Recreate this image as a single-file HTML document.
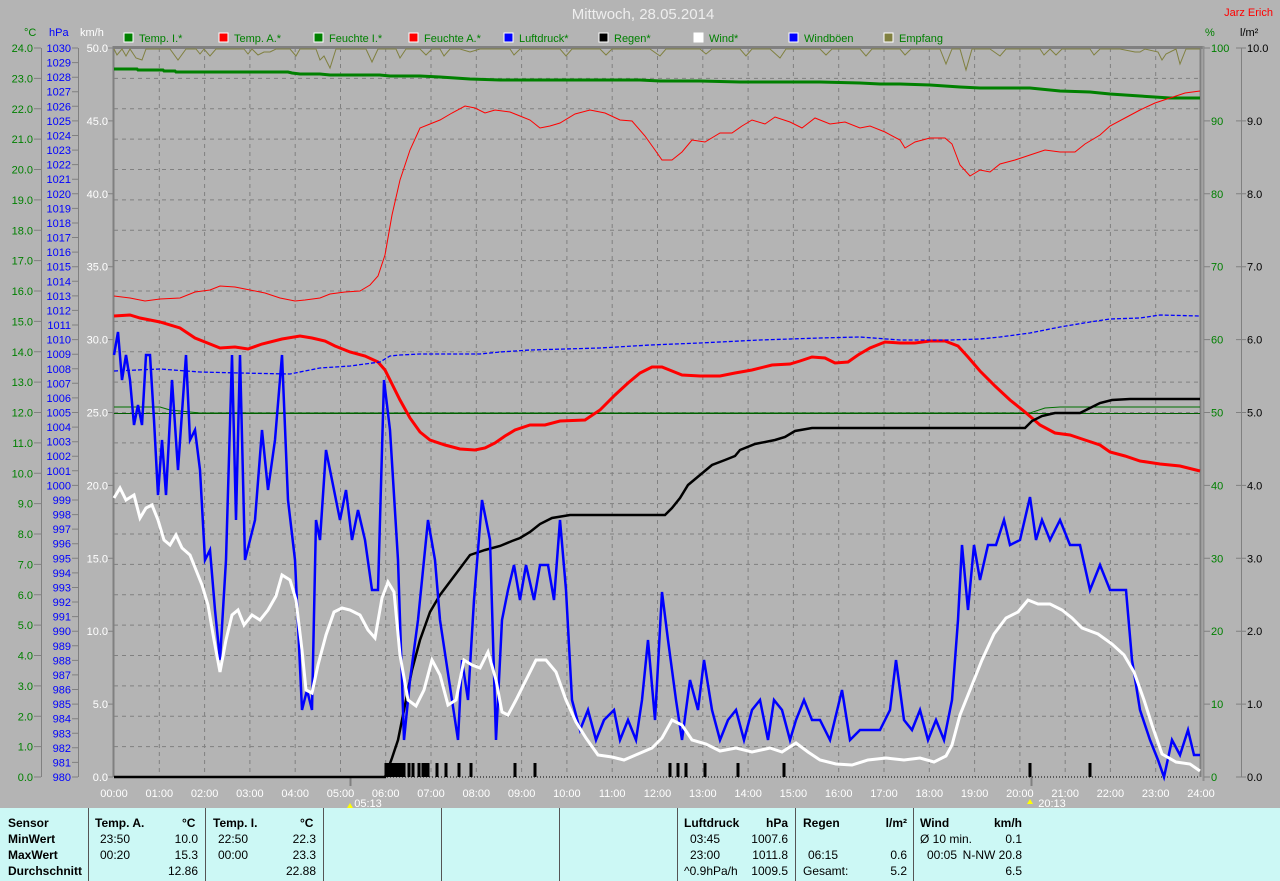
<!DOCTYPE html>
<html><head><meta charset="utf-8"><style>
body{margin:0;width:1280px;height:881px;background:#b4b4b4;overflow:hidden;font-family:"Liberation Sans",sans-serif}
svg{position:absolute;left:0;top:0}
#tbl{position:absolute;left:0;top:808px;width:1280px;height:73px;background:#ccf8f5;font-size:12px;color:#000}
.sep{position:absolute;top:0;width:1px;height:73px;background:#555}
.t{position:absolute;white-space:nowrap}
.b{font-weight:bold}
.r{text-align:right}
</style></head><body>
<svg width="1280" height="808" font-family="Liberation Sans, sans-serif" font-size="11">
<text x="643" y="19" fill="#eeeeee" font-size="15" text-anchor="middle">Mittwoch, 28.05.2014</text>
<text x="1273" y="16" fill="#ff0000" font-size="11" text-anchor="end">Jarz Erich</text>
<!-- legend -->
<g font-size="11">
<rect x="124" y="33" width="9" height="9" fill="#008000" stroke="#fff"/><text x="139" y="42" fill="#008000">Temp. I.*</text>
<rect x="219" y="33" width="9" height="9" fill="#ff0000" stroke="#fff"/><text x="234" y="42" fill="#008000">Temp. A.*</text>
<rect x="314" y="33" width="9" height="9" fill="#008000" stroke="#fff"/><text x="329" y="42" fill="#008000">Feuchte I.*</text>
<rect x="409" y="33" width="9" height="9" fill="#ff0000" stroke="#fff"/><text x="424" y="42" fill="#008000">Feuchte A.*</text>
<rect x="504" y="33" width="9" height="9" fill="#0000ff" stroke="#fff"/><text x="519" y="42" fill="#008000">Luftdruck*</text>
<rect x="599" y="33" width="9" height="9" fill="#000" stroke="#fff"/><text x="614" y="42" fill="#008000">Regen*</text>
<rect x="694" y="33" width="9" height="9" fill="#fff" stroke="#fff"/><text x="709" y="42" fill="#008000">Wind*</text>
<rect x="789" y="33" width="9" height="9" fill="#0000ff" stroke="#fff"/><text x="804" y="42" fill="#008000">Windböen</text>
<rect x="884" y="33" width="9" height="9" fill="#808040" stroke="#fff"/><text x="899" y="42" fill="#008000">Empfang</text>
</g>
<text x="24" y="36" fill="#008000">°C</text>
<text x="49" y="36" fill="#0000ff">hPa</text>
<text x="80" y="36" fill="#fff">km/h</text>
<text x="1205" y="36" fill="#008000">%</text>
<text x="1240" y="36" fill="#000">l/m²</text>
<!-- grid -->
<g stroke="#808080" stroke-dasharray="4,4" stroke-width="1">
<path d="M114 78.4H1200M114 108.75H1200M114 139.1H1200M114 169.5H1200M114 199.9H1200M114 230.3H1200M114 260.6H1200M114 291H1200M114 321.4H1200M114 351.75H1200M114 382.1H1200M114 412.5H1200M114 442.9H1200M114 473.3H1200M114 503.6H1200M114 534H1200M114 564.4H1200M114 594.75H1200M114 625.1H1200M114 655.5H1200M114 685.9H1200M114 716.3H1200M114 746.6H1200"/>
<path d="M159.3 48V777M204.6 48V777M249.9 48V777M295.2 48V777M340.5 48V777M385.7 48V777M431 48V777M476.3 48V777M521.6 48V777M566.9 48V777M612.2 48V777M657.5 48V777M702.8 48V777M748.1 48V777M793.4 48V777M838.7 48V777M884 48V777M929.3 48V777M974.6 48V777M1019.9 48V777M1065.2 48V777M1110.4 48V777M1155.7 48V777"/>
</g>
<!-- frame -->
<path d="M113 47.5H1204" stroke="#808080" stroke-width="3"/>
<path d="M113.5 46V777M1200.5 46V777" stroke="#808080" stroke-width="2"/>
<path d="M1203.5 46V781" stroke="#909090" stroke-width="2"/>
<path d="M41.5 48V777M78.5 48V777M1241.5 48V777" stroke="#808080"/>
<path d="M350.5 777V786M1031.5 777V786" stroke="#808080" stroke-width="2"/>
<!-- ticks -->
<g stroke="#808080">
<path d="M34 48H41M34 78.4H41M34 108.75H41M34 139.1H41M34 169.5H41M34 199.9H41M34 230.3H41M34 260.6H41M34 291H41M34 321.4H41M34 351.75H41M34 382.1H41M34 412.5H41M34 442.9H41M34 473.3H41M34 503.6H41M34 534H41M34 564.4H41M34 594.75H41M34 625.1H41M34 655.5H41M34 685.9H41M34 716.3H41M34 746.6H41M34 777H41"/>
<path d="M72 48H78M72 62.6H78M72 77.2H78M72 91.7H78M72 106.3H78M72 120.9H78M72 135.5H78M72 150.1H78M72 164.6H78M72 179.2H78M72 193.8H78M72 208.4H78M72 223H78M72 237.5H78M72 252.1H78M72 266.7H78M72 281.3H78M72 295.9H78M72 310.4H78M72 325H78M72 339.6H78M72 354.2H78M72 368.8H78M72 383.3H78M72 397.9H78M72 412.5H78M72 427.1H78M72 441.7H78M72 456.2H78M72 470.8H78M72 485.4H78M72 500H78M72 514.6H78M72 529.1H78M72 543.7H78M72 558.3H78M72 572.9H78M72 587.5H78M72 602H78M72 616.6H78M72 631.2H78M72 645.8H78M72 660.4H78M72 674.9H78M72 689.5H78M72 704.1H78M72 718.7H78M72 733.3H78M72 747.8H78M72 762.4H78M72 777H78"/>
<path d="M108 48H113M108 120.9H113M108 193.8H113M108 266.7H113M108 339.6H113M108 412.5H113M108 485.4H113M108 558.3H113M108 631.2H113M108 704.1H113M108 777H113"/>
<path d="M1204 48H1210M1204 120.9H1210M1204 193.8H1210M1204 266.7H1210M1204 339.6H1210M1204 412.5H1210M1204 485.4H1210M1204 558.3H1210M1204 631.2H1210M1204 704.1H1210M1204 777H1210"/>
<path d="M1236 48H1246M1236 120.9H1246M1236 193.8H1246M1236 266.7H1246M1236 339.6H1246M1236 412.5H1246M1236 485.4H1246M1236 558.3H1246M1236 631.2H1246M1236 704.1H1246M1236 777H1246"/>
</g>
<!-- °C labels -->
<g fill="#008000" text-anchor="end">
<text x="33" y="52">24.0</text><text x="33" y="82.4">23.0</text><text x="33" y="112.75">22.0</text><text x="33" y="143.1">21.0</text><text x="33" y="173.5">20.0</text><text x="33" y="203.9">19.0</text><text x="33" y="234.3">18.0</text><text x="33" y="264.6">17.0</text><text x="33" y="295">16.0</text><text x="33" y="325.4">15.0</text><text x="33" y="355.75">14.0</text><text x="33" y="386.1">13.0</text><text x="33" y="416.5">12.0</text><text x="33" y="446.9">11.0</text><text x="33" y="477.3">10.0</text><text x="33" y="507.6">9.0</text><text x="33" y="538">8.0</text><text x="33" y="568.4">7.0</text><text x="33" y="598.75">6.0</text><text x="33" y="629.1">5.0</text><text x="33" y="659.5">4.0</text><text x="33" y="689.9">3.0</text><text x="33" y="720.3">2.0</text><text x="33" y="750.6">1.0</text><text x="33" y="781">0.0</text>
</g>
<g fill="#0000ff" text-anchor="end">
<text x="71" y="52">1030</text><text x="71" y="66.6">1029</text><text x="71" y="81.2">1028</text><text x="71" y="95.7">1027</text><text x="71" y="110.3">1026</text><text x="71" y="124.9">1025</text><text x="71" y="139.5">1024</text><text x="71" y="154.1">1023</text><text x="71" y="168.6">1022</text><text x="71" y="183.2">1021</text><text x="71" y="197.8">1020</text><text x="71" y="212.4">1019</text><text x="71" y="227">1018</text><text x="71" y="241.5">1017</text><text x="71" y="256.1">1016</text><text x="71" y="270.7">1015</text><text x="71" y="285.3">1014</text><text x="71" y="299.9">1013</text><text x="71" y="314.4">1012</text><text x="71" y="329">1011</text><text x="71" y="343.6">1010</text><text x="71" y="358.2">1009</text><text x="71" y="372.8">1008</text><text x="71" y="387.3">1007</text><text x="71" y="401.9">1006</text><text x="71" y="416.5">1005</text><text x="71" y="431.1">1004</text><text x="71" y="445.7">1003</text><text x="71" y="460.2">1002</text><text x="71" y="474.8">1001</text><text x="71" y="489.4">1000</text><text x="71" y="504">999</text><text x="71" y="518.6">998</text><text x="71" y="533.1">997</text><text x="71" y="547.7">996</text><text x="71" y="562.3">995</text><text x="71" y="576.9">994</text><text x="71" y="591.5">993</text><text x="71" y="606">992</text><text x="71" y="620.6">991</text><text x="71" y="635.2">990</text><text x="71" y="649.8">989</text><text x="71" y="664.4">988</text><text x="71" y="678.9">987</text><text x="71" y="693.5">986</text><text x="71" y="708.1">985</text><text x="71" y="722.7">984</text><text x="71" y="737.3">983</text><text x="71" y="751.8">982</text><text x="71" y="766.4">981</text><text x="71" y="781">980</text>
</g>
<g fill="#fff" text-anchor="end">
<text x="108" y="52">50.0</text><text x="108" y="124.9">45.0</text><text x="108" y="197.8">40.0</text><text x="108" y="270.7">35.0</text><text x="108" y="343.6">30.0</text><text x="108" y="416.5">25.0</text><text x="108" y="489.4">20.0</text><text x="108" y="562.3">15.0</text><text x="108" y="635.2">10.0</text><text x="108" y="708.1">5.0</text><text x="108" y="781">0.0</text>
</g>
<g fill="#008000">
<text x="1211" y="52">100</text><text x="1211" y="124.9">90</text><text x="1211" y="197.8">80</text><text x="1211" y="270.7">70</text><text x="1211" y="343.6">60</text><text x="1211" y="416.5">50</text><text x="1211" y="489.4">40</text><text x="1211" y="562.3">30</text><text x="1211" y="635.2">20</text><text x="1211" y="708.1">10</text><text x="1211" y="781">0</text>
</g>
<g fill="#000">
<text x="1247" y="52">10.0</text><text x="1247" y="124.9">9.0</text><text x="1247" y="197.8">8.0</text><text x="1247" y="270.7">7.0</text><text x="1247" y="343.6">6.0</text><text x="1247" y="416.5">5.0</text><text x="1247" y="489.4">4.0</text><text x="1247" y="562.3">3.0</text><text x="1247" y="635.2">2.0</text><text x="1247" y="708.1">1.0</text><text x="1247" y="781">0.0</text>
</g>
<g fill="#fff" text-anchor="middle">
<text x="114" y="797">00:00</text><text x="159.3" y="797">01:00</text><text x="204.6" y="797">02:00</text><text x="249.9" y="797">03:00</text><text x="295.2" y="797">04:00</text><text x="340.5" y="797">05:00</text><text x="385.7" y="797">06:00</text><text x="431" y="797">07:00</text><text x="476.3" y="797">08:00</text><text x="521.6" y="797">09:00</text><text x="566.9" y="797">10:00</text><text x="612.2" y="797">11:00</text><text x="657.5" y="797">12:00</text><text x="702.8" y="797">13:00</text><text x="748.1" y="797">14:00</text><text x="793.4" y="797">15:00</text><text x="838.7" y="797">16:00</text><text x="884" y="797">17:00</text><text x="929.3" y="797">18:00</text><text x="974.6" y="797">19:00</text><text x="1019.9" y="797">20:00</text><text x="1065.2" y="797">21:00</text><text x="1110.4" y="797">22:00</text><text x="1155.7" y="797">23:00</text><text x="1201" y="797">24:00</text>
<text x="368" y="807">05:13</text><text x="1052" y="807">20:13</text>
</g>
<path d="M350 803l-3 5h6z" fill="#ffff00"/><path d="M1030 799l-3 5h6z" fill="#ffff00"/>
<!-- Empfang -->
<polyline fill="none" stroke="#808040" stroke-width="1" points="114,49 117,55 122,49 126,56 130,49 136,58 142,60 146,49 170,49 178,60 186,49 196,49 200,54 204,49 210,56 216,49 244,49 248,54 252,49 258,55 264,52 270,52 276,49 290,49 296,56 300,49 316,49 320,60 324,56 330,68 336,49 366,49 372,62 378,49 396,49 400,58 406,49 420,49 426,55 432,49 440,49 444,56 450,49 460,49 470,52 480,49 510,49 514,55 520,49 560,49 566,56 572,49 600,49 606,55 612,49 640,49 650,49 660,56 666,49 700,49 706,54 712,49 740,49 746,56 752,49 770,49 780,58 786,49 820,49 826,55 832,49 860,49 866,56 872,49 900,49 905,55 911,49 940,49 946,64 952,49 960,49 966,70 972,49 990,49 1000,56 1006,49 1040,49 1044,55 1050,49 1056,55 1062,49 1090,49 1094,55 1100,49 1120,49 1135,52 1140,52 1145,49 1158,52 1162,60 1166,54 1176,49 1180,64 1186,49 1200,49"/>
<!-- Temp I -->
<polyline fill="none" stroke="#008000" stroke-width="3" points="114,69 137,69 138,70 163,70 164,71 175,71 176,72 288,72 292,73 300,74 320,74 330,75 380,75 390,76 420,76 440,77 470,79 500,80 640,80 660,81 700,81 740,82 820,82 860,83 880,84 900,84 930,85 960,87 980,88 1030,88 1060,91 1090,92 1110,94 1140,96 1170,98 1200,98"/>
<!-- Feuchte I thin -->
<polyline fill="none" stroke="#007000" stroke-width="1" points="114,407 160,407 170,410 200,413 1030,413 1045,408 1060,407 1200,407"/>
<path d="M114 413.5H1200" stroke="#006000" stroke-width="1"/>
<!-- Feuchte A thin red -->
<polyline fill="none" stroke="#ff0000" stroke-width="1" points="114,296 130,298 145,301 160,299 180,298 195,292 210,290 220,286 235,287 250,290 265,293 280,298 295,301 305,300 320,298 330,294 345,292 360,291 370,285 378,276 385,255 392,215 400,180 410,150 420,128 430,124 440,120 452,113 465,106 475,108 485,113 495,110 510,112 520,116 530,120 540,128 550,126 560,123 575,114 590,110 605,113 620,120 632,121 645,136 655,150 662,160 672,160 682,152 692,140 705,142 720,133 732,133 742,126 752,120 765,124 775,117 790,122 802,128 815,118 830,124 845,122 860,128 870,126 885,132 900,140 905,148 915,142 930,138 945,138 952,144 960,165 970,176 980,170 990,172 1000,164 1015,160 1030,155 1045,150 1060,152 1075,152 1085,144 1100,135 1110,126 1125,118 1140,110 1155,103 1170,98 1185,93 1200,91"/>
<!-- Temp A thick red -->
<polyline fill="none" stroke="#ff0000" stroke-width="3" points="114,316 130,315 140,318 160,322 180,328 195,338 205,342 220,348 235,347 248,349 262,344 282,339 300,336 312,338 325,341 335,346 350,352 365,356 378,362 385,370 392,384 400,400 410,418 420,432 430,440 445,445 460,449 475,450 485,448 495,443 505,436 515,430 530,425 545,425 560,421 585,420 600,410 615,395 628,383 640,373 652,367 662,367 672,371 682,375 700,376 720,376 735,373 752,370 772,365 790,364 800,361 812,357 825,358 835,363 848,362 858,355 870,348 885,342 900,343 915,343 930,341 945,341 958,346 968,357 980,371 995,386 1010,400 1025,412 1040,425 1055,433 1070,435 1085,440 1100,445 1110,452 1125,456 1140,461 1160,464 1180,466 1200,471"/>
<!-- Luftdruck -->
<polyline fill="none" stroke="#0000ff" stroke-width="1.3" stroke-dasharray="4,2" points="114,371 160,369 200,372 240,373 290,374 320,368 350,366 380,362 390,356 400,355 420,354 480,354 500,352 530,350 600,348 650,345 700,343 760,340 820,338 860,337 900,340 950,340 980,339 1000,337 1030,333 1060,327 1090,322 1110,319 1140,318 1160,315 1200,316"/>
<!-- Regen -->
<polyline fill="none" stroke="#000" stroke-width="2.5" points="114,777 385,777 392,758 398,740 404,710 412,670 420,640 430,612 440,595 455,575 470,555 485,550 500,546 512,541 520,538 530,532 540,524 552,518 570,515 665,515 672,508 680,498 688,485 700,475 712,465 725,460 735,456 740,450 755,444 775,440 785,437 795,431 812,428 1025,428 1032,421 1042,416 1055,413 1080,413 1090,408 1100,403 1112,400 1130,399 1200,399"/>
<path d="M386 777V763M389 777V763M392 777V763M395 777V763M398 777V763M401 777V763M404 777V763M409 777V763M413 777V763M419 777V763M423 777V763M425 777V763M428 777V763M437 777V763M446 777V763M459 777V763M471 777V763M515 777V763M535 777V763M670 777V763M678 777V763M686 777V763M705 777V763M738 777V763M784 777V763M1030 777V763M1090 777V763" stroke="#000" stroke-width="3"/>
<path d="M114 777H1200" stroke="#000" stroke-width="1" stroke-dasharray="1,2"/>
<!-- Windböen -->
<polyline fill="none" stroke="#0000ff" stroke-width="2.5" points="114,355 118,332 122,380 126,355 130,380 134,425 138,405 142,425 146,355 150,355 154,420 158,495 162,440 166,495 172,380 178,470 186,355 190,440 195,430 200,470 205,560 210,550 215,610 220,660 226,560 232,355 236,520 240,355 245,560 255,520 262,430 268,490 275,440 282,355 288,500 295,560 302,710 307,690 312,710 316,520 320,540 326,450 332,480 340,520 346,490 352,540 358,510 365,540 372,590 378,590 384,380 390,430 398,560 404,740 410,680 418,620 428,520 435,560 440,620 446,660 452,700 458,740 462,660 468,700 474,600 482,500 490,540 496,740 502,620 508,590 514,565 520,600 526,565 534,600 540,565 548,565 554,600 560,520 566,590 572,700 580,730 588,710 596,740 604,720 614,710 620,740 628,720 636,740 642,700 648,640 655,720 662,592 668,640 676,700 682,740 690,680 698,710 704,660 712,710 720,740 728,720 736,710 744,740 752,710 760,700 768,740 774,700 782,710 790,740 796,720 804,700 812,720 820,720 830,740 842,690 850,740 860,730 880,730 890,710 896,660 904,720 912,730 920,710 928,740 936,720 944,740 952,700 958,620 962,545 968,610 974,545 980,580 988,545 996,545 1004,520 1010,545 1020,540 1030,497 1036,540 1042,520 1050,540 1060,520 1070,545 1080,545 1090,590 1100,565 1110,590 1126,590 1132,660 1140,710 1150,740 1158,760 1164,777 1172,740 1180,755 1188,730 1194,755 1200,755"/>
<!-- Wind -->
<polyline fill="none" stroke="#fff" stroke-width="3" points="114,498 120,488 126,500 134,495 140,518 146,508 152,505 158,520 164,540 170,545 176,535 182,548 190,555 196,570 202,585 208,605 214,640 220,672 226,640 232,615 238,610 244,625 252,615 260,620 268,610 276,596 282,575 290,580 296,600 302,650 306,690 312,693 318,665 326,635 334,612 342,608 350,610 360,615 368,630 375,638 382,598 388,582 394,592 400,655 408,700 416,706 424,690 432,660 440,675 448,705 456,700 464,660 472,665 480,668 488,652 496,680 502,712 508,715 516,700 526,680 536,660 546,660 556,672 566,700 576,722 586,738 598,755 612,757 624,760 638,754 652,748 662,738 672,720 682,725 692,740 706,744 720,751 736,748 752,752 770,748 782,752 796,743 808,752 820,760 836,764 852,765 868,760 886,758 904,760 920,758 934,762 946,756 952,745 960,715 970,690 982,660 994,634 1006,618 1018,612 1028,600 1038,604 1050,604 1062,610 1072,618 1082,628 1098,634 1112,644 1124,655 1134,672 1144,700 1152,725 1162,754 1176,762 1190,764 1200,771"/>
</svg>
<div id="tbl">
<div class="sep" style="left:88px"></div><div class="sep" style="left:205px"></div><div class="sep" style="left:323px"></div><div class="sep" style="left:441px"></div><div class="sep" style="left:559px"></div><div class="sep" style="left:677px"></div><div class="sep" style="left:795px"></div><div class="sep" style="left:913px"></div>
<div class="t b" style="left:8px;top:8px">Sensor</div>
<div class="t b" style="left:8px;top:24px">MinWert</div>
<div class="t b" style="left:8px;top:40px">MaxWert</div>
<div class="t b" style="left:8px;top:56px">Durchschnitt</div>
<div class="t b" style="left:95px;top:8px">Temp. A.</div><div class="t b" style="left:182px;top:8px">°C</div>
<div class="t" style="left:100px;top:24px">23:50</div><div class="t r" style="right:1082px;top:24px">10.0</div>
<div class="t" style="left:100px;top:40px">00:20</div><div class="t r" style="right:1082px;top:40px">15.3</div>
<div class="t r" style="right:1082px;top:56px">12.86</div>
<div class="t b" style="left:213px;top:8px">Temp. I.</div><div class="t b" style="left:300px;top:8px">°C</div>
<div class="t" style="left:218px;top:24px">22:50</div><div class="t r" style="right:964px;top:24px">22.3</div>
<div class="t" style="left:218px;top:40px">00:00</div><div class="t r" style="right:964px;top:40px">23.3</div>
<div class="t r" style="right:964px;top:56px">22.88</div>
<div class="t b" style="left:684px;top:8px">Luftdruck</div><div class="t b r" style="right:492px;top:8px">hPa</div>
<div class="t" style="left:690px;top:24px">03:45</div><div class="t r" style="right:492px;top:24px">1007.6</div>
<div class="t" style="left:690px;top:40px">23:00</div><div class="t r" style="right:492px;top:40px">1011.8</div>
<div class="t" style="left:684px;top:56px">^0.9hPa/h</div><div class="t r" style="right:492px;top:56px">1009.5</div>
<div class="t b" style="left:803px;top:8px">Regen</div><div class="t b r" style="right:373px;top:8px">l/m²</div>
<div class="t" style="left:808px;top:40px">06:15</div><div class="t r" style="right:373px;top:40px">0.6</div>
<div class="t" style="left:803px;top:56px">Gesamt:</div><div class="t r" style="right:373px;top:56px">5.2</div>
<div class="t b" style="left:920px;top:8px">Wind</div><div class="t b r" style="right:258px;top:8px">km/h</div>
<div class="t" style="left:920px;top:24px">Ø 10 min.</div><div class="t r" style="right:258px;top:24px">0.1</div>
<div class="t" style="left:927px;top:40px">00:05</div><div class="t r" style="right:258px;top:40px">N-NW 20.8</div>
<div class="t r" style="right:258px;top:56px">6.5</div>
</div>
</body></html>
